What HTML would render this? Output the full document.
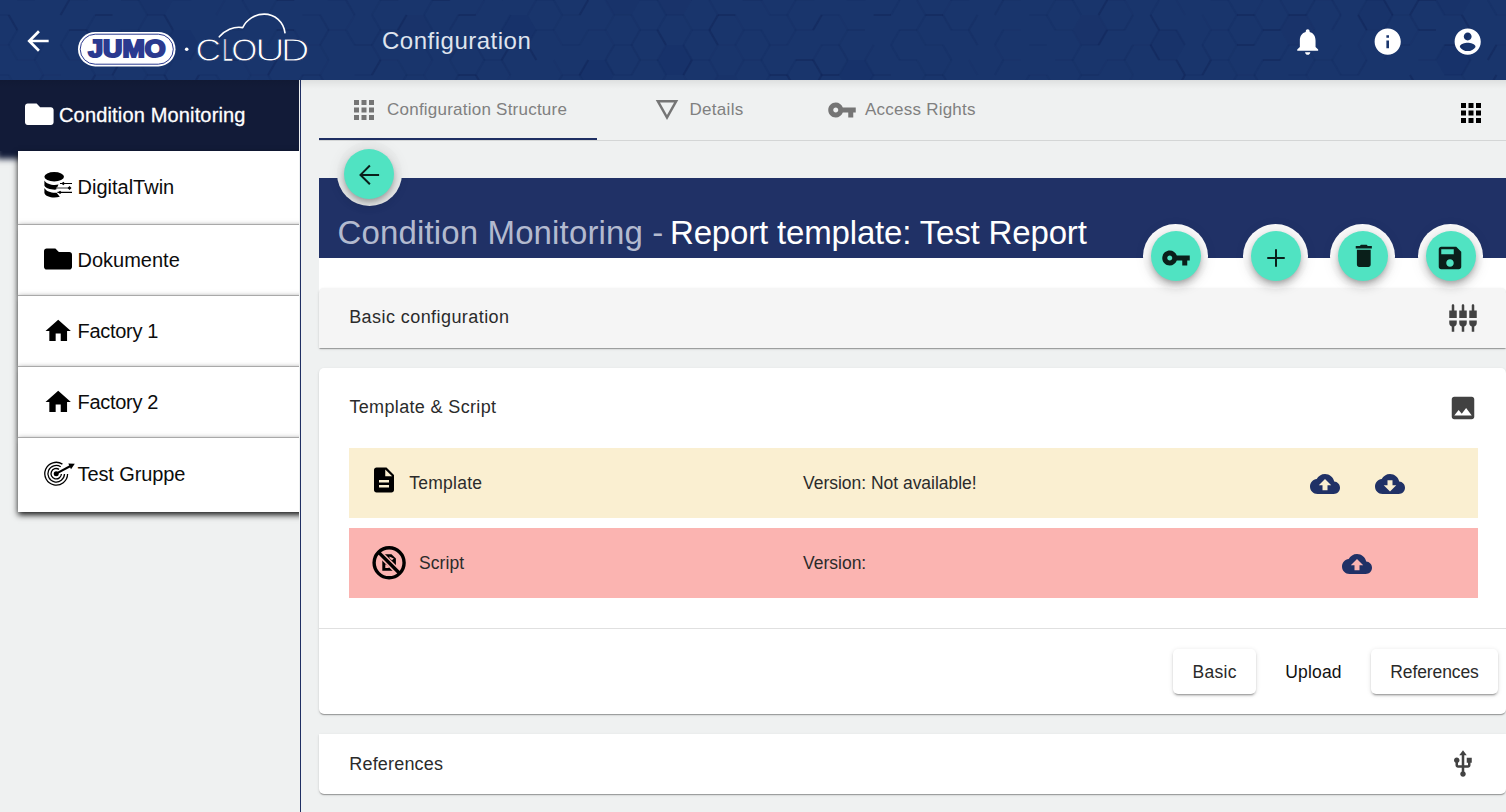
<!DOCTYPE html>
<html lang="en">
<head>
<meta charset="utf-8">
<title>Configuration</title>
<style>
*{box-sizing:border-box;margin:0;padding:0}
html,body{width:1506px;height:812px;overflow:hidden}
body{font-family:"Liberation Sans",sans-serif;background:#eff1f1;color:#212121;position:relative}
.abs{position:absolute}
svg{display:block;position:absolute;overflow:visible}
/* header */
#hdr{position:absolute;left:0;top:0;width:1506px;height:80px;background:#19356c;overflow:hidden;z-index:5}
#hdrshadow{position:absolute;left:0;top:80px;width:1506px;height:9px;background:linear-gradient(rgba(0,0,0,.075),rgba(0,0,0,.03) 50%,rgba(0,0,0,0));z-index:6;pointer-events:none}
#hdr .title{position:absolute;left:382px;top:26.800px;font-size:24px;line-height:28px;color:#dfe4ee;white-space:nowrap;letter-spacing:.5px}
/* sidebar */
#side{position:absolute;left:0;top:80px;width:299px;height:732px;overflow:hidden}
#sidehead{position:absolute;left:0;top:0;width:299px;height:71px;background:#121b38;box-shadow:0 4px 6px 4px #121b38}
#sidehead .t{-webkit-text-stroke:.3px #fff;position:absolute;left:59px;top:23px;font-size:20px;line-height:24px;color:#fff;white-space:nowrap;letter-spacing:.16px}
.li{position:absolute;left:18px;width:290px;background:#fff;box-shadow:0 3px 6px rgba(0,0,0,.9);border-top:1px solid #a9a9a9}
.li .t{position:absolute;left:59.500px;font-size:20px;line-height:24px;color:#0c0c0c;white-space:nowrap}
#vline{position:absolute;left:300px;top:80px;width:1px;height:732px;background:#1f2f63}
/* tabs */
.tab{position:absolute;top:80px;height:60px;font-size:17px;color:#808080;white-space:nowrap}
.tab .t{position:absolute;top:19.400px;line-height:22px}
#tabline{position:absolute;left:319px;top:140px;width:1187px;height:1px;background:#d4d6d6}
#ink{position:absolute;left:319px;top:138px;width:278px;height:2px;background:#1f2f63}
/* title bar */
#tbar{position:absolute;left:319px;top:178px;width:1187px;height:80px;background:#203166}
#tbar .t{position:absolute;left:18px;top:35px;font-size:33px;line-height:40px;color:#fff;white-space:nowrap}
#tbar .t.g{color:#b3bacf;letter-spacing:.14px}
#tbar .t.w{letter-spacing:-.165px}
#strip{position:absolute;left:319px;top:258px;width:1187px;height:35px;background:#fff}
.fab{z-index:3;position:absolute;width:50px;height:50px;border-radius:50%;background:#50e3c2;box-shadow:0 3px 5px -1px rgba(0,0,0,.2),0 6px 10px rgba(0,0,0,.14),0 1px 18px rgba(0,0,0,.12)}
.ring{z-index:2;position:absolute;width:65px;height:65px;border-radius:50%;background:#fcfcfc}
/* panels */
.panel{position:absolute;left:319px;width:1187px;background:#fff;box-shadow:0 2px 1px -1px rgba(0,0,0,.2),0 1px 1px rgba(0,0,0,.14),0 1px 3px rgba(0,0,0,.12)}
.panel .h{position:absolute;left:30px;font-size:18px;line-height:22px;color:#2b2b2b;white-space:nowrap}
.row{position:absolute;left:30px;width:1129px;height:70px}
.row .t{position:absolute;font-size:17.5px;line-height:22px;top:24px;color:#2b2b2b;white-space:nowrap}
.btn{position:absolute;top:281px;height:45px;border-radius:5px;background:#fff;box-shadow:0 3px 1px -2px rgba(0,0,0,.2),0 2px 2px rgba(0,0,0,.14),0 1px 5px rgba(0,0,0,.12);font-size:17.5px;line-height:46px;text-align:center;color:#2a2a2a;white-space:nowrap}
</style>
</head>
<body>
<!-- HEADER -->
<div id="hdr">
  <svg style="left:0;top:0" width="1506" height="80" viewBox="0 0 1506 80" id="hexbg"><g stroke="#0d1a4c" stroke-width="2" fill="none"><path d="M-43.2 -15.0L-34.6 -30.0" stroke-opacity="0.10"/><path d="M-34.6 -30.0L-17.3 -30.0" stroke-opacity="0.14"/><path d="M-17.3 -30.0L-8.7 -15.0" stroke-opacity="0.10"/><path d="M-43.2 15.0L-34.6 0.0" stroke-opacity="0.30"/><path d="M-34.6 0.0L-17.3 0.0" stroke-opacity="0.04"/><path d="M-43.2 45.0L-34.6 30.0" stroke-opacity="0.10"/><path d="M-34.6 30.0L-17.3 30.0" stroke-opacity="0.30"/><path d="M-43.2 45.0 L-34.6 30.0 L-17.3 30.0 L-8.7 45.0 L-17.3 60.0 L-34.6 60.0 Z" fill="#0d1f55" fill-opacity="0.07" stroke="none"/><path d="M-17.3 60.0L-8.7 75.0" stroke-opacity="0.14"/><path d="M-34.6 90.0L-17.3 90.0" stroke-opacity="0.30"/><path d="M-17.3 90.0L-8.7 105.0" stroke-opacity="0.10"/><path d="M-43.2 135.0L-34.6 120.0" stroke-opacity="0.30"/><path d="M-17.3 120.0L-8.7 135.0" stroke-opacity="0.30"/><path d="M-43.2 135.0 L-34.6 120.0 L-17.3 120.0 L-8.7 135.0 L-17.3 150.0 L-34.6 150.0 Z" fill="#0d1f55" fill-opacity="0.10" stroke="none"/><path d="M-17.3 0.0L-8.7 -15.0" stroke-opacity="0.04"/><path d="M-8.7 -15.0L8.7 -15.0" stroke-opacity="0.30"/><path d="M-17.3 30.0L-8.7 15.0" stroke-opacity="0.08"/><path d="M-8.7 15.0L8.7 15.0" stroke-opacity="0.10"/><path d="M8.7 15.0L17.3 30.0" stroke-opacity="0.30"/><path d="M-17.3 60.0L-8.7 45.0" stroke-opacity="0.14"/><path d="M-8.7 45.0L8.7 45.0" stroke-opacity="0.04"/><path d="M8.7 45.0L17.3 60.0" stroke-opacity="0.06"/><path d="M-8.7 75.0L8.7 75.0" stroke-opacity="0.10"/><path d="M8.7 75.0L17.3 90.0" stroke-opacity="0.06"/><path d="M-17.3 120.0L-8.7 105.0" stroke-opacity="0.14"/><path d="M8.7 105.0L17.3 120.0" stroke-opacity="0.06"/><path d="M8.7 -15.0L17.3 -30.0" stroke-opacity="0.04"/><path d="M17.3 -30.0L34.6 -30.0" stroke-opacity="0.14"/><path d="M34.6 -30.0L43.2 -15.0" stroke-opacity="0.06"/><path d="M8.7 -15.0 L17.3 -30.0 L34.6 -30.0 L43.2 -15.0 L34.6 0.0 L17.3 0.0 Z" fill="#0d1f55" fill-opacity="0.10" stroke="none"/><path d="M17.3 0.0L34.6 0.0" stroke-opacity="0.10"/><path d="M8.7 45.0L17.3 30.0" stroke-opacity="0.10"/><path d="M17.3 60.0L34.6 60.0" stroke-opacity="0.04"/><path d="M34.6 60.0L43.2 75.0" stroke-opacity="0.04"/><path d="M17.3 90.0L34.6 90.0" stroke-opacity="0.10"/><path d="M34.6 90.0L43.2 105.0" stroke-opacity="0.10"/><path d="M8.7 135.0L17.3 120.0" stroke-opacity="0.10"/><path d="M17.3 120.0L34.6 120.0" stroke-opacity="0.10"/><path d="M34.6 -30.0L43.3 -45.0" stroke-opacity="0.04"/><path d="M43.3 -45.0L60.6 -45.0" stroke-opacity="0.06"/><path d="M60.6 -45.0L69.2 -30.0" stroke-opacity="0.08"/><path d="M34.6 -30.0 L43.3 -45.0 L60.6 -45.0 L69.2 -30.0 L60.6 -15.0 L43.3 -15.0 Z" fill="#0d1f55" fill-opacity="0.07" stroke="none"/><path d="M43.3 -15.0L60.6 -15.0" stroke-opacity="0.10"/><path d="M34.6 60.0L43.3 45.0" stroke-opacity="0.10"/><path d="M60.6 45.0L69.2 60.0" stroke-opacity="0.14"/><path d="M34.6 90.0L43.3 75.0" stroke-opacity="0.14"/><path d="M43.3 75.0L60.6 75.0" stroke-opacity="0.04"/><path d="M34.6 120.0L43.3 105.0" stroke-opacity="0.10"/><path d="M60.6 105.0L69.2 120.0" stroke-opacity="0.10"/><path d="M60.6 -15.0L69.2 -30.0" stroke-opacity="0.04"/><path d="M86.5 -30.0L95.2 -15.0" stroke-opacity="0.06"/><path d="M60.6 15.0L69.2 0.0" stroke-opacity="0.30"/><path d="M69.2 0.0L86.5 0.0" stroke-opacity="0.06"/><path d="M60.6 45.0L69.2 30.0" stroke-opacity="0.10"/><path d="M69.2 30.0L86.5 30.0" stroke-opacity="0.30"/><path d="M86.5 30.0L95.2 45.0" stroke-opacity="0.30"/><path d="M69.2 60.0L86.5 60.0" stroke-opacity="0.04"/><path d="M86.5 60.0L95.2 75.0" stroke-opacity="0.10"/><path d="M60.6 105.0L69.2 90.0" stroke-opacity="0.30"/><path d="M69.2 90.0L86.5 90.0" stroke-opacity="0.08"/><path d="M86.5 90.0L95.2 105.0" stroke-opacity="0.06"/><path d="M86.5 120.0L95.2 135.0" stroke-opacity="0.04"/><path d="M86.5 -30.0L95.2 -45.0" stroke-opacity="0.04"/><path d="M112.5 -45.0L121.1 -30.0" stroke-opacity="0.30"/><path d="M86.5 0.0L95.2 -15.0" stroke-opacity="0.30"/><path d="M95.2 -15.0L112.5 -15.0" stroke-opacity="0.10"/><path d="M86.5 30.0L95.2 15.0" stroke-opacity="0.10"/><path d="M95.2 15.0L112.5 15.0" stroke-opacity="0.30"/><path d="M112.5 45.0L121.1 60.0" stroke-opacity="0.06"/><path d="M86.5 90.0L95.2 75.0" stroke-opacity="0.30"/><path d="M95.2 75.0L112.5 75.0" stroke-opacity="0.04"/><path d="M112.5 75.0L121.1 90.0" stroke-opacity="0.04"/><path d="M86.5 120.0L95.2 105.0" stroke-opacity="0.14"/><path d="M95.2 105.0L112.5 105.0" stroke-opacity="0.04"/><path d="M112.5 105.0L121.1 120.0" stroke-opacity="0.10"/><path d="M112.5 -15.0L121.1 -30.0" stroke-opacity="0.30"/><path d="M138.4 -30.0L147.1 -15.0" stroke-opacity="0.10"/><path d="M112.5 -15.0 L121.1 -30.0 L138.4 -30.0 L147.1 -15.0 L138.4 0.0 L121.1 0.0 Z" fill="#0d1f55" fill-opacity="0.04" stroke="none"/><path d="M121.1 0.0L138.4 0.0" stroke-opacity="0.14"/><path d="M138.4 0.0L147.1 15.0" stroke-opacity="0.06"/><path d="M112.5 45.0L121.1 30.0" stroke-opacity="0.10"/><path d="M121.1 30.0L138.4 30.0" stroke-opacity="0.06"/><path d="M138.4 30.0L147.1 45.0" stroke-opacity="0.10"/><path d="M112.5 75.0L121.1 60.0" stroke-opacity="0.30"/><path d="M121.1 60.0L138.4 60.0" stroke-opacity="0.10"/><path d="M138.4 60.0L147.1 75.0" stroke-opacity="0.06"/><path d="M138.4 90.0L147.1 105.0" stroke-opacity="0.04"/><path d="M112.5 135.0L121.1 120.0" stroke-opacity="0.30"/><path d="M121.1 120.0L138.4 120.0" stroke-opacity="0.30"/><path d="M138.4 -30.0L147.1 -45.0" stroke-opacity="0.04"/><path d="M138.4 0.0L147.1 -15.0" stroke-opacity="0.10"/><path d="M147.1 -15.0L164.4 -15.0" stroke-opacity="0.04"/><path d="M138.4 0.0 L147.1 -15.0 L164.4 -15.0 L173.0 0.0 L164.4 15.0 L147.1 15.0 Z" fill="#0d1f55" fill-opacity="0.07" stroke="none"/><path d="M138.4 30.0L147.1 15.0" stroke-opacity="0.08"/><path d="M147.1 15.0L164.4 15.0" stroke-opacity="0.14"/><path d="M164.4 15.0L173.0 30.0" stroke-opacity="0.30"/><path d="M147.1 45.0L164.4 45.0" stroke-opacity="0.08"/><path d="M138.4 90.0L147.1 75.0" stroke-opacity="0.08"/><path d="M147.1 75.0L164.4 75.0" stroke-opacity="0.14"/><path d="M164.4 75.0L173.0 90.0" stroke-opacity="0.30"/><path d="M138.4 120.0L147.1 105.0" stroke-opacity="0.30"/><path d="M164.3 -15.0L173.0 -30.0" stroke-opacity="0.08"/><path d="M173.0 -30.0L190.3 -30.0" stroke-opacity="0.06"/><path d="M164.3 -15.0 L173.0 -30.0 L190.3 -30.0 L199.0 -15.0 L190.3 0.0 L173.0 0.0 Z" fill="#0d1f55" fill-opacity="0.10" stroke="none"/><path d="M173.0 0.0L190.3 0.0" stroke-opacity="0.10"/><path d="M164.3 45.0L173.0 30.0" stroke-opacity="0.08"/><path d="M164.3 45.0 L173.0 30.0 L190.3 30.0 L199.0 45.0 L190.3 60.0 L173.0 60.0 Z" fill="#0d1f55" fill-opacity="0.10" stroke="none"/><path d="M164.3 75.0L173.0 60.0" stroke-opacity="0.08"/><path d="M164.3 105.0L173.0 90.0" stroke-opacity="0.08"/><path d="M173.0 90.0L190.3 90.0" stroke-opacity="0.08"/><path d="M173.0 120.0L190.3 120.0" stroke-opacity="0.10"/><path d="M190.3 -30.0L199.0 -45.0" stroke-opacity="0.30"/><path d="M216.3 -45.0L224.9 -30.0" stroke-opacity="0.30"/><path d="M190.3 0.0L199.0 -15.0" stroke-opacity="0.10"/><path d="M199.0 -15.0L216.3 -15.0" stroke-opacity="0.30"/><path d="M190.3 60.0L199.0 45.0" stroke-opacity="0.10"/><path d="M199.0 45.0L216.3 45.0" stroke-opacity="0.08"/><path d="M216.3 45.0L224.9 60.0" stroke-opacity="0.10"/><path d="M190.3 90.0L199.0 75.0" stroke-opacity="0.30"/><path d="M199.0 75.0L216.3 75.0" stroke-opacity="0.10"/><path d="M216.3 75.0L224.9 90.0" stroke-opacity="0.10"/><path d="M190.3 120.0L199.0 105.0" stroke-opacity="0.14"/><path d="M216.3 105.0L224.9 120.0" stroke-opacity="0.14"/><path d="M224.9 -30.0L242.2 -30.0" stroke-opacity="0.06"/><path d="M242.2 -30.0L250.9 -15.0" stroke-opacity="0.30"/><path d="M216.2 -15.0 L224.9 -30.0 L242.2 -30.0 L250.9 -15.0 L242.2 0.0 L224.9 0.0 Z" fill="#0d1f55" fill-opacity="0.04" stroke="none"/><path d="M216.2 15.0L224.9 0.0" stroke-opacity="0.04"/><path d="M242.2 0.0L250.9 15.0" stroke-opacity="0.10"/><path d="M216.2 45.0L224.9 30.0" stroke-opacity="0.10"/><path d="M224.9 30.0L242.2 30.0" stroke-opacity="0.06"/><path d="M224.9 60.0L242.2 60.0" stroke-opacity="0.30"/><path d="M242.2 60.0L250.9 75.0" stroke-opacity="0.04"/><path d="M216.2 105.0L224.9 90.0" stroke-opacity="0.08"/><path d="M224.9 90.0L242.2 90.0" stroke-opacity="0.10"/><path d="M242.2 90.0L250.9 105.0" stroke-opacity="0.10"/><path d="M216.2 135.0L224.9 120.0" stroke-opacity="0.08"/><path d="M224.9 120.0L242.2 120.0" stroke-opacity="0.10"/><path d="M242.2 120.0L250.9 135.0" stroke-opacity="0.06"/><path d="M242.2 -30.0L250.8 -45.0" stroke-opacity="0.10"/><path d="M250.8 -45.0L268.1 -45.0" stroke-opacity="0.04"/><path d="M268.1 -45.0L276.8 -30.0" stroke-opacity="0.04"/><path d="M242.2 0.0L250.8 -15.0" stroke-opacity="0.30"/><path d="M250.8 -15.0L268.1 -15.0" stroke-opacity="0.08"/><path d="M268.1 -15.0L276.8 0.0" stroke-opacity="0.04"/><path d="M242.2 30.0L250.8 15.0" stroke-opacity="0.10"/><path d="M250.8 15.0L268.1 15.0" stroke-opacity="0.08"/><path d="M242.2 60.0L250.8 45.0" stroke-opacity="0.06"/><path d="M242.2 90.0L250.8 75.0" stroke-opacity="0.06"/><path d="M250.8 75.0L268.1 75.0" stroke-opacity="0.04"/><path d="M268.1 75.0L276.8 90.0" stroke-opacity="0.10"/><path d="M242.2 120.0L250.8 105.0" stroke-opacity="0.14"/><path d="M250.8 105.0L268.1 105.0" stroke-opacity="0.10"/><path d="M268.1 105.0L276.8 120.0" stroke-opacity="0.08"/><path d="M268.1 -15.0L276.8 -30.0" stroke-opacity="0.30"/><path d="M276.8 -30.0L294.1 -30.0" stroke-opacity="0.10"/><path d="M294.1 -30.0L302.8 -15.0" stroke-opacity="0.08"/><path d="M268.1 -15.0 L276.8 -30.0 L294.1 -30.0 L302.8 -15.0 L294.1 0.0 L276.8 0.0 Z" fill="#0d1f55" fill-opacity="0.04" stroke="none"/><path d="M268.1 15.0L276.8 0.0" stroke-opacity="0.06"/><path d="M276.8 0.0L294.1 0.0" stroke-opacity="0.30"/><path d="M268.1 45.0L276.8 30.0" stroke-opacity="0.06"/><path d="M276.8 30.0L294.1 30.0" stroke-opacity="0.30"/><path d="M294.1 30.0L302.8 45.0" stroke-opacity="0.08"/><path d="M268.1 75.0L276.8 60.0" stroke-opacity="0.30"/><path d="M268.1 105.0L276.8 90.0" stroke-opacity="0.04"/><path d="M294.1 90.0L302.8 105.0" stroke-opacity="0.06"/><path d="M294.1 -30.0L302.8 -45.0" stroke-opacity="0.14"/><path d="M302.8 -45.0L320.1 -45.0" stroke-opacity="0.08"/><path d="M294.1 0.0L302.8 -15.0" stroke-opacity="0.04"/><path d="M302.8 -15.0L320.1 -15.0" stroke-opacity="0.10"/><path d="M320.1 -15.0L328.7 0.0" stroke-opacity="0.06"/><path d="M302.8 15.0L320.1 15.0" stroke-opacity="0.10"/><path d="M320.1 15.0L328.7 30.0" stroke-opacity="0.14"/><path d="M302.8 45.0L320.1 45.0" stroke-opacity="0.04"/><path d="M320.1 45.0L328.7 60.0" stroke-opacity="0.06"/><path d="M294.1 90.0L302.8 75.0" stroke-opacity="0.14"/><path d="M302.8 75.0L320.1 75.0" stroke-opacity="0.14"/><path d="M320.1 75.0L328.7 90.0" stroke-opacity="0.14"/><path d="M302.8 105.0L320.1 105.0" stroke-opacity="0.10"/><path d="M320.1 105.0L328.7 120.0" stroke-opacity="0.04"/><path d="M294.1 120.0 L302.8 105.0 L320.1 105.0 L328.7 120.0 L320.1 135.0 L302.8 135.0 Z" fill="#0d1f55" fill-opacity="0.10" stroke="none"/><path d="M320.1 -15.0L328.7 -30.0" stroke-opacity="0.10"/><path d="M346.0 -30.0L354.7 -15.0" stroke-opacity="0.10"/><path d="M328.7 0.0L346.0 0.0" stroke-opacity="0.10"/><path d="M346.0 0.0L354.7 15.0" stroke-opacity="0.14"/><path d="M320.1 45.0L328.7 30.0" stroke-opacity="0.14"/><path d="M328.7 30.0L346.0 30.0" stroke-opacity="0.08"/><path d="M346.0 30.0L354.7 45.0" stroke-opacity="0.10"/><path d="M320.1 75.0L328.7 60.0" stroke-opacity="0.04"/><path d="M320.1 105.0L328.7 90.0" stroke-opacity="0.10"/><path d="M346.0 90.0L354.7 105.0" stroke-opacity="0.06"/><path d="M320.1 135.0L328.7 120.0" stroke-opacity="0.08"/><path d="M328.7 120.0L346.0 120.0" stroke-opacity="0.06"/><path d="M371.9 -45.0L380.6 -30.0" stroke-opacity="0.10"/><path d="M346.0 0.0L354.7 -15.0" stroke-opacity="0.10"/><path d="M354.7 -15.0L371.9 -15.0" stroke-opacity="0.06"/><path d="M371.9 -15.0L380.6 0.0" stroke-opacity="0.10"/><path d="M346.0 30.0L354.7 15.0" stroke-opacity="0.04"/><path d="M371.9 15.0L380.6 30.0" stroke-opacity="0.10"/><path d="M354.7 45.0L371.9 45.0" stroke-opacity="0.14"/><path d="M371.9 45.0L380.6 60.0" stroke-opacity="0.08"/><path d="M354.7 75.0L371.9 75.0" stroke-opacity="0.10"/><path d="M346.0 120.0L354.7 105.0" stroke-opacity="0.14"/><path d="M354.7 105.0L371.9 105.0" stroke-opacity="0.10"/><path d="M371.9 105.0L380.6 120.0" stroke-opacity="0.10"/><path d="M380.6 -30.0L397.9 -30.0" stroke-opacity="0.04"/><path d="M397.9 -30.0L406.6 -15.0" stroke-opacity="0.10"/><path d="M371.9 15.0L380.6 0.0" stroke-opacity="0.06"/><path d="M380.6 0.0L397.9 0.0" stroke-opacity="0.14"/><path d="M371.9 45.0L380.6 30.0" stroke-opacity="0.14"/><path d="M380.6 30.0L397.9 30.0" stroke-opacity="0.06"/><path d="M397.9 30.0L406.6 45.0" stroke-opacity="0.06"/><path d="M371.9 75.0L380.6 60.0" stroke-opacity="0.30"/><path d="M380.6 60.0L397.9 60.0" stroke-opacity="0.04"/><path d="M397.9 60.0L406.6 75.0" stroke-opacity="0.06"/><path d="M371.9 105.0L380.6 90.0" stroke-opacity="0.14"/><path d="M380.6 90.0L397.9 90.0" stroke-opacity="0.14"/><path d="M397.9 90.0L406.6 105.0" stroke-opacity="0.06"/><path d="M371.9 135.0L380.6 120.0" stroke-opacity="0.04"/><path d="M380.6 120.0L397.9 120.0" stroke-opacity="0.10"/><path d="M397.9 120.0L406.6 135.0" stroke-opacity="0.14"/><path d="M406.6 -45.0L423.9 -45.0" stroke-opacity="0.30"/><path d="M423.9 -45.0L432.5 -30.0" stroke-opacity="0.10"/><path d="M397.9 -30.0 L406.6 -45.0 L423.9 -45.0 L432.5 -30.0 L423.9 -15.0 L406.6 -15.0 Z" fill="#0d1f55" fill-opacity="0.04" stroke="none"/><path d="M397.9 0.0L406.6 -15.0" stroke-opacity="0.14"/><path d="M406.6 -15.0L423.9 -15.0" stroke-opacity="0.10"/><path d="M423.9 -15.0L432.5 0.0" stroke-opacity="0.14"/><path d="M397.9 30.0L406.6 15.0" stroke-opacity="0.30"/><path d="M423.9 15.0L432.5 30.0" stroke-opacity="0.10"/><path d="M397.9 30.0 L406.6 15.0 L423.9 15.0 L432.5 30.0 L423.9 45.0 L406.6 45.0 Z" fill="#0d1f55" fill-opacity="0.04" stroke="none"/><path d="M406.6 45.0L423.9 45.0" stroke-opacity="0.14"/><path d="M423.9 45.0L432.5 60.0" stroke-opacity="0.10"/><path d="M397.9 90.0L406.6 75.0" stroke-opacity="0.10"/><path d="M406.6 75.0L423.9 75.0" stroke-opacity="0.06"/><path d="M423.9 75.0L432.5 90.0" stroke-opacity="0.04"/><path d="M406.6 105.0L423.9 105.0" stroke-opacity="0.08"/><path d="M423.9 105.0L432.5 120.0" stroke-opacity="0.10"/><path d="M423.9 -15.0L432.5 -30.0" stroke-opacity="0.10"/><path d="M432.5 -30.0L449.8 -30.0" stroke-opacity="0.14"/><path d="M449.8 -30.0L458.5 -15.0" stroke-opacity="0.08"/><path d="M423.9 15.0L432.5 0.0" stroke-opacity="0.10"/><path d="M432.5 0.0L449.8 0.0" stroke-opacity="0.30"/><path d="M423.9 75.0L432.5 60.0" stroke-opacity="0.04"/><path d="M449.8 60.0L458.5 75.0" stroke-opacity="0.06"/><path d="M423.9 105.0L432.5 90.0" stroke-opacity="0.08"/><path d="M432.5 90.0L449.8 90.0" stroke-opacity="0.04"/><path d="M449.8 90.0L458.5 105.0" stroke-opacity="0.30"/><path d="M423.9 135.0L432.5 120.0" stroke-opacity="0.10"/><path d="M432.5 120.0L449.8 120.0" stroke-opacity="0.30"/><path d="M449.8 -30.0L458.5 -45.0" stroke-opacity="0.30"/><path d="M458.5 -45.0L475.8 -45.0" stroke-opacity="0.06"/><path d="M475.8 -45.0L484.4 -30.0" stroke-opacity="0.04"/><path d="M449.8 0.0L458.5 -15.0" stroke-opacity="0.10"/><path d="M475.8 -15.0L484.4 0.0" stroke-opacity="0.10"/><path d="M449.8 30.0L458.5 15.0" stroke-opacity="0.14"/><path d="M458.5 15.0L475.8 15.0" stroke-opacity="0.30"/><path d="M449.8 60.0L458.5 45.0" stroke-opacity="0.14"/><path d="M458.5 45.0L475.8 45.0" stroke-opacity="0.04"/><path d="M475.8 45.0L484.4 60.0" stroke-opacity="0.14"/><path d="M449.8 90.0L458.5 75.0" stroke-opacity="0.14"/><path d="M458.5 75.0L475.8 75.0" stroke-opacity="0.30"/><path d="M475.8 75.0L484.4 90.0" stroke-opacity="0.30"/><path d="M449.8 120.0L458.5 105.0" stroke-opacity="0.04"/><path d="M458.5 105.0L475.8 105.0" stroke-opacity="0.08"/><path d="M475.8 -15.0L484.4 -30.0" stroke-opacity="0.08"/><path d="M484.4 -30.0L501.7 -30.0" stroke-opacity="0.04"/><path d="M501.7 -30.0L510.4 -15.0" stroke-opacity="0.04"/><path d="M475.8 15.0L484.4 0.0" stroke-opacity="0.04"/><path d="M501.7 30.0L510.4 45.0" stroke-opacity="0.06"/><path d="M475.8 75.0L484.4 60.0" stroke-opacity="0.10"/><path d="M484.4 60.0L501.7 60.0" stroke-opacity="0.10"/><path d="M501.7 60.0L510.4 75.0" stroke-opacity="0.14"/><path d="M484.4 90.0L501.7 90.0" stroke-opacity="0.04"/><path d="M501.7 90.0L510.4 105.0" stroke-opacity="0.10"/><path d="M501.7 120.0L510.4 135.0" stroke-opacity="0.04"/><path d="M501.7 -30.0L510.4 -45.0" stroke-opacity="0.08"/><path d="M510.4 -45.0L527.6 -45.0" stroke-opacity="0.08"/><path d="M501.7 0.0L510.4 -15.0" stroke-opacity="0.08"/><path d="M510.4 -15.0L527.6 -15.0" stroke-opacity="0.14"/><path d="M527.6 -15.0L536.3 0.0" stroke-opacity="0.04"/><path d="M501.7 30.0L510.4 15.0" stroke-opacity="0.10"/><path d="M501.7 30.0 L510.4 15.0 L527.6 15.0 L536.3 30.0 L527.6 45.0 L510.4 45.0 Z" fill="#0d1f55" fill-opacity="0.10" stroke="none"/><path d="M501.7 60.0L510.4 45.0" stroke-opacity="0.30"/><path d="M510.4 45.0L527.6 45.0" stroke-opacity="0.14"/><path d="M527.6 45.0L536.3 60.0" stroke-opacity="0.30"/><path d="M501.7 90.0L510.4 75.0" stroke-opacity="0.04"/><path d="M510.4 105.0L527.6 105.0" stroke-opacity="0.06"/><path d="M536.3 -30.0L553.6 -30.0" stroke-opacity="0.10"/><path d="M527.7 15.0L536.3 0.0" stroke-opacity="0.08"/><path d="M536.3 0.0L553.6 0.0" stroke-opacity="0.10"/><path d="M553.6 0.0L562.2 15.0" stroke-opacity="0.10"/><path d="M527.7 45.0L536.3 30.0" stroke-opacity="0.08"/><path d="M536.3 30.0L553.6 30.0" stroke-opacity="0.10"/><path d="M553.6 30.0L562.2 45.0" stroke-opacity="0.04"/><path d="M553.6 60.0L562.2 75.0" stroke-opacity="0.04"/><path d="M527.7 105.0L536.3 90.0" stroke-opacity="0.10"/><path d="M536.3 90.0L553.6 90.0" stroke-opacity="0.08"/><path d="M553.6 90.0L562.2 105.0" stroke-opacity="0.08"/><path d="M527.7 135.0L536.3 120.0" stroke-opacity="0.04"/><path d="M536.3 120.0L553.6 120.0" stroke-opacity="0.30"/><path d="M527.7 135.0 L536.3 120.0 L553.6 120.0 L562.2 135.0 L553.6 150.0 L536.3 150.0 Z" fill="#0d1f55" fill-opacity="0.04" stroke="none"/><path d="M553.6 -30.0L562.2 -45.0" stroke-opacity="0.08"/><path d="M579.5 -45.0L588.2 -30.0" stroke-opacity="0.10"/><path d="M553.6 0.0L562.2 -15.0" stroke-opacity="0.04"/><path d="M562.2 -15.0L579.5 -15.0" stroke-opacity="0.14"/><path d="M579.5 -15.0L588.2 0.0" stroke-opacity="0.30"/><path d="M553.6 30.0L562.2 15.0" stroke-opacity="0.06"/><path d="M562.2 15.0L579.5 15.0" stroke-opacity="0.06"/><path d="M562.2 45.0L579.5 45.0" stroke-opacity="0.10"/><path d="M553.6 90.0L562.2 75.0" stroke-opacity="0.14"/><path d="M562.2 75.0L579.5 75.0" stroke-opacity="0.08"/><path d="M579.5 75.0L588.2 90.0" stroke-opacity="0.10"/><path d="M553.6 120.0L562.2 105.0" stroke-opacity="0.10"/><path d="M562.2 105.0L579.5 105.0" stroke-opacity="0.04"/><path d="M553.6 120.0 L562.2 105.0 L579.5 105.0 L588.2 120.0 L579.5 135.0 L562.2 135.0 Z" fill="#0d1f55" fill-opacity="0.07" stroke="none"/><path d="M579.6 -15.0L588.2 -30.0" stroke-opacity="0.06"/><path d="M588.2 -30.0L605.5 -30.0" stroke-opacity="0.10"/><path d="M579.6 -15.0 L588.2 -30.0 L605.5 -30.0 L614.1 -15.0 L605.5 0.0 L588.2 0.0 Z" fill="#0d1f55" fill-opacity="0.07" stroke="none"/><path d="M579.6 15.0L588.2 0.0" stroke-opacity="0.30"/><path d="M605.5 0.0L614.1 15.0" stroke-opacity="0.04"/><path d="M579.6 45.0L588.2 30.0" stroke-opacity="0.06"/><path d="M588.2 30.0L605.5 30.0" stroke-opacity="0.08"/><path d="M605.5 30.0L614.1 45.0" stroke-opacity="0.04"/><path d="M579.6 75.0L588.2 60.0" stroke-opacity="0.30"/><path d="M605.5 60.0L614.1 75.0" stroke-opacity="0.14"/><path d="M579.6 75.0 L588.2 60.0 L605.5 60.0 L614.1 75.0 L605.5 90.0 L588.2 90.0 Z" fill="#0d1f55" fill-opacity="0.10" stroke="none"/><path d="M579.6 105.0L588.2 90.0" stroke-opacity="0.10"/><path d="M588.2 90.0L605.5 90.0" stroke-opacity="0.04"/><path d="M579.6 135.0L588.2 120.0" stroke-opacity="0.30"/><path d="M605.5 -30.0L614.2 -45.0" stroke-opacity="0.04"/><path d="M614.2 -45.0L631.5 -45.0" stroke-opacity="0.06"/><path d="M631.5 -45.0L640.1 -30.0" stroke-opacity="0.10"/><path d="M614.2 -15.0L631.5 -15.0" stroke-opacity="0.04"/><path d="M631.5 -15.0L640.1 0.0" stroke-opacity="0.10"/><path d="M605.5 0.0 L614.2 -15.0 L631.5 -15.0 L640.1 0.0 L631.5 15.0 L614.2 15.0 Z" fill="#0d1f55" fill-opacity="0.07" stroke="none"/><path d="M605.5 30.0L614.2 15.0" stroke-opacity="0.06"/><path d="M614.2 15.0L631.5 15.0" stroke-opacity="0.06"/><path d="M631.5 15.0L640.1 30.0" stroke-opacity="0.08"/><path d="M605.5 60.0L614.2 45.0" stroke-opacity="0.14"/><path d="M614.2 45.0L631.5 45.0" stroke-opacity="0.10"/><path d="M631.5 45.0L640.1 60.0" stroke-opacity="0.14"/><path d="M614.2 75.0L631.5 75.0" stroke-opacity="0.10"/><path d="M614.2 105.0L631.5 105.0" stroke-opacity="0.10"/><path d="M640.1 -30.0L657.4 -30.0" stroke-opacity="0.10"/><path d="M657.4 -30.0L666.0 -15.0" stroke-opacity="0.14"/><path d="M640.1 0.0L657.4 0.0" stroke-opacity="0.10"/><path d="M657.4 0.0L666.0 15.0" stroke-opacity="0.10"/><path d="M631.5 45.0L640.1 30.0" stroke-opacity="0.14"/><path d="M640.1 30.0L657.4 30.0" stroke-opacity="0.10"/><path d="M657.4 30.0L666.0 45.0" stroke-opacity="0.30"/><path d="M631.5 75.0L640.1 60.0" stroke-opacity="0.14"/><path d="M640.1 60.0L657.4 60.0" stroke-opacity="0.06"/><path d="M657.4 60.0L666.0 75.0" stroke-opacity="0.10"/><path d="M631.5 105.0L640.1 90.0" stroke-opacity="0.14"/><path d="M640.1 90.0L657.4 90.0" stroke-opacity="0.06"/><path d="M657.4 90.0L666.0 105.0" stroke-opacity="0.06"/><path d="M631.5 105.0 L640.1 90.0 L657.4 90.0 L666.0 105.0 L657.4 120.0 L640.1 120.0 Z" fill="#0d1f55" fill-opacity="0.04" stroke="none"/><path d="M631.5 135.0L640.1 120.0" stroke-opacity="0.30"/><path d="M657.4 -30.0L666.1 -45.0" stroke-opacity="0.10"/><path d="M683.4 -45.0L692.0 -30.0" stroke-opacity="0.08"/><path d="M666.1 -15.0L683.4 -15.0" stroke-opacity="0.30"/><path d="M683.4 -15.0L692.0 0.0" stroke-opacity="0.08"/><path d="M657.4 0.0 L666.1 -15.0 L683.4 -15.0 L692.0 0.0 L683.4 15.0 L666.1 15.0 Z" fill="#0d1f55" fill-opacity="0.04" stroke="none"/><path d="M657.4 30.0L666.1 15.0" stroke-opacity="0.10"/><path d="M666.1 15.0L683.4 15.0" stroke-opacity="0.10"/><path d="M683.4 15.0L692.0 30.0" stroke-opacity="0.06"/><path d="M657.4 60.0L666.1 45.0" stroke-opacity="0.04"/><path d="M683.4 45.0L692.0 60.0" stroke-opacity="0.14"/><path d="M657.4 60.0 L666.1 45.0 L683.4 45.0 L692.0 60.0 L683.4 75.0 L666.1 75.0 Z" fill="#0d1f55" fill-opacity="0.10" stroke="none"/><path d="M657.4 90.0L666.1 75.0" stroke-opacity="0.10"/><path d="M683.4 75.0L692.0 90.0" stroke-opacity="0.04"/><path d="M683.4 105.0L692.0 120.0" stroke-opacity="0.30"/><path d="M692.0 -30.0L709.3 -30.0" stroke-opacity="0.04"/><path d="M709.3 0.0L717.9 15.0" stroke-opacity="0.08"/><path d="M683.4 45.0L692.0 30.0" stroke-opacity="0.10"/><path d="M692.0 30.0L709.3 30.0" stroke-opacity="0.10"/><path d="M709.3 30.0L717.9 45.0" stroke-opacity="0.30"/><path d="M683.4 75.0L692.0 60.0" stroke-opacity="0.30"/><path d="M692.0 60.0L709.3 60.0" stroke-opacity="0.10"/><path d="M709.3 60.0L717.9 75.0" stroke-opacity="0.08"/><path d="M683.4 105.0L692.0 90.0" stroke-opacity="0.14"/><path d="M709.3 90.0L717.9 105.0" stroke-opacity="0.06"/><path d="M683.4 135.0L692.0 120.0" stroke-opacity="0.04"/><path d="M692.0 120.0L709.3 120.0" stroke-opacity="0.10"/><path d="M709.3 -30.0L718.0 -45.0" stroke-opacity="0.06"/><path d="M718.0 -45.0L735.2 -45.0" stroke-opacity="0.14"/><path d="M735.2 -45.0L743.9 -30.0" stroke-opacity="0.30"/><path d="M709.3 0.0L718.0 -15.0" stroke-opacity="0.06"/><path d="M718.0 -15.0L735.2 -15.0" stroke-opacity="0.06"/><path d="M735.2 -15.0L743.9 0.0" stroke-opacity="0.30"/><path d="M709.3 30.0L718.0 15.0" stroke-opacity="0.30"/><path d="M718.0 15.0L735.2 15.0" stroke-opacity="0.30"/><path d="M735.2 15.0L743.9 30.0" stroke-opacity="0.04"/><path d="M709.3 60.0L718.0 45.0" stroke-opacity="0.04"/><path d="M718.0 45.0L735.2 45.0" stroke-opacity="0.04"/><path d="M735.2 45.0L743.9 60.0" stroke-opacity="0.04"/><path d="M709.3 90.0L718.0 75.0" stroke-opacity="0.04"/><path d="M709.3 90.0 L718.0 75.0 L735.2 75.0 L743.9 90.0 L735.2 105.0 L718.0 105.0 Z" fill="#0d1f55" fill-opacity="0.07" stroke="none"/><path d="M709.3 120.0L718.0 105.0" stroke-opacity="0.10"/><path d="M735.2 105.0L743.9 120.0" stroke-opacity="0.30"/><path d="M709.3 120.0 L718.0 105.0 L735.2 105.0 L743.9 120.0 L735.2 135.0 L718.0 135.0 Z" fill="#0d1f55" fill-opacity="0.04" stroke="none"/><path d="M735.3 -15.0L743.9 -30.0" stroke-opacity="0.14"/><path d="M743.9 -30.0L761.2 -30.0" stroke-opacity="0.06"/><path d="M743.9 0.0L761.2 0.0" stroke-opacity="0.14"/><path d="M761.2 0.0L769.9 15.0" stroke-opacity="0.04"/><path d="M735.3 45.0L743.9 30.0" stroke-opacity="0.08"/><path d="M743.9 30.0L761.2 30.0" stroke-opacity="0.10"/><path d="M761.2 30.0L769.9 45.0" stroke-opacity="0.10"/><path d="M735.3 75.0L743.9 60.0" stroke-opacity="0.08"/><path d="M743.9 60.0L761.2 60.0" stroke-opacity="0.08"/><path d="M761.2 60.0L769.9 75.0" stroke-opacity="0.10"/><path d="M761.2 90.0L769.9 105.0" stroke-opacity="0.10"/><path d="M735.3 135.0L743.9 120.0" stroke-opacity="0.30"/><path d="M743.9 120.0L761.2 120.0" stroke-opacity="0.04"/><path d="M761.2 120.0L769.9 135.0" stroke-opacity="0.10"/><path d="M761.2 -30.0L769.9 -45.0" stroke-opacity="0.06"/><path d="M769.9 -45.0L787.1 -45.0" stroke-opacity="0.10"/><path d="M761.2 0.0L769.9 -15.0" stroke-opacity="0.30"/><path d="M769.9 -15.0L787.1 -15.0" stroke-opacity="0.08"/><path d="M787.1 -15.0L795.8 0.0" stroke-opacity="0.06"/><path d="M769.9 15.0L787.1 15.0" stroke-opacity="0.10"/><path d="M787.1 15.0L795.8 30.0" stroke-opacity="0.08"/><path d="M761.2 60.0L769.9 45.0" stroke-opacity="0.10"/><path d="M769.9 45.0L787.1 45.0" stroke-opacity="0.08"/><path d="M761.2 90.0L769.9 75.0" stroke-opacity="0.10"/><path d="M769.9 75.0L787.1 75.0" stroke-opacity="0.30"/><path d="M787.1 75.0L795.8 90.0" stroke-opacity="0.30"/><path d="M761.2 120.0L769.9 105.0" stroke-opacity="0.10"/><path d="M769.9 105.0L787.1 105.0" stroke-opacity="0.06"/><path d="M761.2 120.0 L769.9 105.0 L787.1 105.0 L795.8 120.0 L787.1 135.0 L769.9 135.0 Z" fill="#0d1f55" fill-opacity="0.04" stroke="none"/><path d="M787.2 -15.0L795.8 -30.0" stroke-opacity="0.30"/><path d="M813.1 -30.0L821.8 -15.0" stroke-opacity="0.06"/><path d="M787.2 15.0L795.8 0.0" stroke-opacity="0.08"/><path d="M795.8 0.0L813.1 0.0" stroke-opacity="0.06"/><path d="M787.2 45.0L795.8 30.0" stroke-opacity="0.08"/><path d="M795.8 30.0L813.1 30.0" stroke-opacity="0.08"/><path d="M787.2 75.0L795.8 60.0" stroke-opacity="0.10"/><path d="M795.8 60.0L813.1 60.0" stroke-opacity="0.30"/><path d="M813.1 60.0L821.8 75.0" stroke-opacity="0.30"/><path d="M787.2 105.0L795.8 90.0" stroke-opacity="0.06"/><path d="M795.8 90.0L813.1 90.0" stroke-opacity="0.10"/><path d="M813.1 90.0L821.8 105.0" stroke-opacity="0.14"/><path d="M787.2 135.0L795.8 120.0" stroke-opacity="0.06"/><path d="M795.8 120.0L813.1 120.0" stroke-opacity="0.10"/><path d="M813.1 120.0L821.8 135.0" stroke-opacity="0.08"/><path d="M813.1 -30.0L821.8 -45.0" stroke-opacity="0.14"/><path d="M821.8 -45.0L839.1 -45.0" stroke-opacity="0.04"/><path d="M813.1 0.0L821.8 -15.0" stroke-opacity="0.08"/><path d="M839.1 -15.0L847.7 0.0" stroke-opacity="0.08"/><path d="M813.1 30.0L821.8 15.0" stroke-opacity="0.30"/><path d="M821.8 15.0L839.1 15.0" stroke-opacity="0.10"/><path d="M839.1 15.0L847.7 30.0" stroke-opacity="0.04"/><path d="M813.1 60.0L821.8 45.0" stroke-opacity="0.08"/><path d="M821.8 45.0L839.1 45.0" stroke-opacity="0.10"/><path d="M839.1 45.0L847.7 60.0" stroke-opacity="0.14"/><path d="M813.1 90.0L821.8 75.0" stroke-opacity="0.30"/><path d="M821.8 75.0L839.1 75.0" stroke-opacity="0.30"/><path d="M813.1 120.0L821.8 105.0" stroke-opacity="0.10"/><path d="M821.8 105.0L839.1 105.0" stroke-opacity="0.06"/><path d="M847.7 -30.0L865.0 -30.0" stroke-opacity="0.14"/><path d="M847.7 0.0L865.0 0.0" stroke-opacity="0.10"/><path d="M839.1 45.0L847.7 30.0" stroke-opacity="0.06"/><path d="M847.7 30.0L865.0 30.0" stroke-opacity="0.14"/><path d="M839.1 75.0L847.7 60.0" stroke-opacity="0.06"/><path d="M865.0 60.0L873.6 75.0" stroke-opacity="0.08"/><path d="M839.1 75.0 L847.7 60.0 L865.0 60.0 L873.6 75.0 L865.0 90.0 L847.7 90.0 Z" fill="#0d1f55" fill-opacity="0.10" stroke="none"/><path d="M865.0 90.0L873.6 105.0" stroke-opacity="0.10"/><path d="M839.1 135.0L847.7 120.0" stroke-opacity="0.04"/><path d="M847.7 120.0L865.0 120.0" stroke-opacity="0.10"/><path d="M865.0 120.0L873.6 135.0" stroke-opacity="0.14"/><path d="M865.0 -30.0L873.7 -45.0" stroke-opacity="0.10"/><path d="M873.7 -45.0L891.0 -45.0" stroke-opacity="0.10"/><path d="M891.0 -45.0L899.6 -30.0" stroke-opacity="0.08"/><path d="M865.0 0.0L873.7 -15.0" stroke-opacity="0.08"/><path d="M891.0 -15.0L899.6 0.0" stroke-opacity="0.10"/><path d="M873.7 15.0L891.0 15.0" stroke-opacity="0.30"/><path d="M865.0 60.0L873.7 45.0" stroke-opacity="0.08"/><path d="M891.0 45.0L899.6 60.0" stroke-opacity="0.10"/><path d="M865.0 90.0L873.7 75.0" stroke-opacity="0.10"/><path d="M873.7 75.0L891.0 75.0" stroke-opacity="0.14"/><path d="M891.0 105.0L899.6 120.0" stroke-opacity="0.10"/><path d="M899.6 -30.0L916.9 -30.0" stroke-opacity="0.04"/><path d="M891.0 15.0L899.6 0.0" stroke-opacity="0.10"/><path d="M916.9 0.0L925.5 15.0" stroke-opacity="0.08"/><path d="M891.0 45.0L899.6 30.0" stroke-opacity="0.10"/><path d="M899.6 30.0L916.9 30.0" stroke-opacity="0.14"/><path d="M916.9 30.0L925.5 45.0" stroke-opacity="0.06"/><path d="M899.6 60.0L916.9 60.0" stroke-opacity="0.10"/><path d="M916.9 60.0L925.5 75.0" stroke-opacity="0.06"/><path d="M891.0 105.0L899.6 90.0" stroke-opacity="0.06"/><path d="M891.0 135.0L899.6 120.0" stroke-opacity="0.10"/><path d="M916.9 120.0L925.5 135.0" stroke-opacity="0.30"/><path d="M925.6 -45.0L942.9 -45.0" stroke-opacity="0.08"/><path d="M916.9 0.0L925.6 -15.0" stroke-opacity="0.08"/><path d="M925.6 -15.0L942.9 -15.0" stroke-opacity="0.04"/><path d="M942.9 -15.0L951.5 0.0" stroke-opacity="0.30"/><path d="M916.9 30.0L925.6 15.0" stroke-opacity="0.10"/><path d="M925.6 15.0L942.9 15.0" stroke-opacity="0.30"/><path d="M942.9 15.0L951.5 30.0" stroke-opacity="0.14"/><path d="M925.6 45.0L942.9 45.0" stroke-opacity="0.06"/><path d="M942.9 45.0L951.5 60.0" stroke-opacity="0.10"/><path d="M916.9 90.0L925.6 75.0" stroke-opacity="0.06"/><path d="M925.6 75.0L942.9 75.0" stroke-opacity="0.14"/><path d="M942.9 75.0L951.5 90.0" stroke-opacity="0.14"/><path d="M916.9 120.0L925.6 105.0" stroke-opacity="0.06"/><path d="M925.6 105.0L942.9 105.0" stroke-opacity="0.10"/><path d="M942.9 105.0L951.5 120.0" stroke-opacity="0.10"/><path d="M942.9 -15.0L951.5 -30.0" stroke-opacity="0.08"/><path d="M951.5 -30.0L968.8 -30.0" stroke-opacity="0.14"/><path d="M942.9 15.0L951.5 0.0" stroke-opacity="0.04"/><path d="M951.5 0.0L968.8 0.0" stroke-opacity="0.10"/><path d="M951.5 30.0L968.8 30.0" stroke-opacity="0.10"/><path d="M968.8 30.0L977.5 45.0" stroke-opacity="0.14"/><path d="M942.9 75.0L951.5 60.0" stroke-opacity="0.06"/><path d="M968.8 60.0L977.5 75.0" stroke-opacity="0.04"/><path d="M942.9 105.0L951.5 90.0" stroke-opacity="0.10"/><path d="M951.5 90.0L968.8 90.0" stroke-opacity="0.08"/><path d="M968.8 90.0L977.5 105.0" stroke-opacity="0.10"/><path d="M942.9 135.0L951.5 120.0" stroke-opacity="0.10"/><path d="M951.5 120.0L968.8 120.0" stroke-opacity="0.30"/><path d="M968.8 -30.0L977.5 -45.0" stroke-opacity="0.08"/><path d="M994.8 -45.0L1003.4 -30.0" stroke-opacity="0.06"/><path d="M968.8 0.0L977.5 -15.0" stroke-opacity="0.14"/><path d="M994.8 -15.0L1003.4 0.0" stroke-opacity="0.30"/><path d="M968.8 30.0L977.5 15.0" stroke-opacity="0.14"/><path d="M994.8 45.0L1003.4 60.0" stroke-opacity="0.04"/><path d="M968.8 120.0L977.5 105.0" stroke-opacity="0.30"/><path d="M977.5 105.0L994.8 105.0" stroke-opacity="0.14"/><path d="M994.8 -15.0L1003.4 -30.0" stroke-opacity="0.10"/><path d="M1020.7 -30.0L1029.4 -15.0" stroke-opacity="0.30"/><path d="M994.8 15.0L1003.4 0.0" stroke-opacity="0.14"/><path d="M1003.4 0.0L1020.7 0.0" stroke-opacity="0.06"/><path d="M994.8 45.0L1003.4 30.0" stroke-opacity="0.10"/><path d="M1003.4 30.0L1020.7 30.0" stroke-opacity="0.04"/><path d="M994.8 75.0L1003.4 60.0" stroke-opacity="0.10"/><path d="M1003.4 60.0L1020.7 60.0" stroke-opacity="0.04"/><path d="M994.8 105.0L1003.4 90.0" stroke-opacity="0.14"/><path d="M1003.4 90.0L1020.7 90.0" stroke-opacity="0.10"/><path d="M994.8 135.0L1003.4 120.0" stroke-opacity="0.06"/><path d="M1003.4 120.0L1020.7 120.0" stroke-opacity="0.08"/><path d="M1020.7 120.0L1029.4 135.0" stroke-opacity="0.06"/><path d="M1020.7 -30.0L1029.3 -45.0" stroke-opacity="0.14"/><path d="M1029.3 -45.0L1046.7 -45.0" stroke-opacity="0.06"/><path d="M1046.7 -45.0L1055.3 -30.0" stroke-opacity="0.10"/><path d="M1029.3 -15.0L1046.7 -15.0" stroke-opacity="0.08"/><path d="M1029.3 15.0L1046.7 15.0" stroke-opacity="0.10"/><path d="M1046.7 15.0L1055.3 30.0" stroke-opacity="0.10"/><path d="M1029.3 45.0L1046.7 45.0" stroke-opacity="0.10"/><path d="M1020.7 90.0L1029.3 75.0" stroke-opacity="0.10"/><path d="M1029.3 75.0L1046.7 75.0" stroke-opacity="0.04"/><path d="M1046.7 75.0L1055.3 90.0" stroke-opacity="0.06"/><path d="M1020.7 120.0L1029.3 105.0" stroke-opacity="0.10"/><path d="M1046.7 105.0L1055.3 120.0" stroke-opacity="0.04"/><path d="M1055.3 -30.0L1072.6 -30.0" stroke-opacity="0.06"/><path d="M1072.6 -30.0L1081.2 -15.0" stroke-opacity="0.10"/><path d="M1046.7 15.0L1055.3 0.0" stroke-opacity="0.06"/><path d="M1055.3 0.0L1072.6 0.0" stroke-opacity="0.08"/><path d="M1072.6 0.0L1081.2 15.0" stroke-opacity="0.10"/><path d="M1055.3 30.0L1072.6 30.0" stroke-opacity="0.06"/><path d="M1072.6 30.0L1081.2 45.0" stroke-opacity="0.04"/><path d="M1055.3 60.0L1072.6 60.0" stroke-opacity="0.08"/><path d="M1072.6 60.0L1081.2 75.0" stroke-opacity="0.06"/><path d="M1046.7 105.0L1055.3 90.0" stroke-opacity="0.30"/><path d="M1055.3 90.0L1072.6 90.0" stroke-opacity="0.10"/><path d="M1072.6 90.0L1081.2 105.0" stroke-opacity="0.08"/><path d="M1046.7 135.0L1055.3 120.0" stroke-opacity="0.10"/><path d="M1072.6 0.0L1081.2 -15.0" stroke-opacity="0.10"/><path d="M1098.6 -15.0L1107.2 0.0" stroke-opacity="0.10"/><path d="M1098.6 15.0L1107.2 30.0" stroke-opacity="0.04"/><path d="M1072.6 30.0 L1081.2 15.0 L1098.6 15.0 L1107.2 30.0 L1098.6 45.0 L1081.2 45.0 Z" fill="#0d1f55" fill-opacity="0.04" stroke="none"/><path d="M1072.6 60.0L1081.2 45.0" stroke-opacity="0.10"/><path d="M1081.2 45.0L1098.6 45.0" stroke-opacity="0.10"/><path d="M1072.6 90.0L1081.2 75.0" stroke-opacity="0.10"/><path d="M1081.2 75.0L1098.6 75.0" stroke-opacity="0.14"/><path d="M1081.2 105.0L1098.6 105.0" stroke-opacity="0.10"/><path d="M1098.6 105.0L1107.2 120.0" stroke-opacity="0.10"/><path d="M1098.6 -15.0L1107.2 -30.0" stroke-opacity="0.10"/><path d="M1107.2 -30.0L1124.5 -30.0" stroke-opacity="0.30"/><path d="M1098.6 15.0L1107.2 0.0" stroke-opacity="0.30"/><path d="M1107.2 0.0L1124.5 0.0" stroke-opacity="0.08"/><path d="M1124.5 0.0L1133.2 15.0" stroke-opacity="0.04"/><path d="M1098.6 45.0L1107.2 30.0" stroke-opacity="0.30"/><path d="M1107.2 30.0L1124.5 30.0" stroke-opacity="0.14"/><path d="M1098.6 75.0L1107.2 60.0" stroke-opacity="0.04"/><path d="M1107.2 60.0L1124.5 60.0" stroke-opacity="0.08"/><path d="M1124.5 60.0L1133.2 75.0" stroke-opacity="0.06"/><path d="M1107.2 90.0L1124.5 90.0" stroke-opacity="0.14"/><path d="M1124.5 90.0L1133.2 105.0" stroke-opacity="0.10"/><path d="M1098.6 135.0L1107.2 120.0" stroke-opacity="0.08"/><path d="M1107.2 120.0L1124.5 120.0" stroke-opacity="0.06"/><path d="M1133.1 -45.0L1150.5 -45.0" stroke-opacity="0.06"/><path d="M1150.5 -45.0L1159.1 -30.0" stroke-opacity="0.14"/><path d="M1124.5 0.0L1133.1 -15.0" stroke-opacity="0.14"/><path d="M1133.1 -15.0L1150.5 -15.0" stroke-opacity="0.04"/><path d="M1150.5 -15.0L1159.1 0.0" stroke-opacity="0.08"/><path d="M1124.5 30.0L1133.1 15.0" stroke-opacity="0.14"/><path d="M1150.5 15.0L1159.1 30.0" stroke-opacity="0.30"/><path d="M1124.5 60.0L1133.1 45.0" stroke-opacity="0.14"/><path d="M1133.1 45.0L1150.5 45.0" stroke-opacity="0.04"/><path d="M1150.5 45.0L1159.1 60.0" stroke-opacity="0.30"/><path d="M1124.5 90.0L1133.1 75.0" stroke-opacity="0.04"/><path d="M1124.5 120.0L1133.1 105.0" stroke-opacity="0.30"/><path d="M1133.1 105.0L1150.5 105.0" stroke-opacity="0.10"/><path d="M1150.5 105.0L1159.1 120.0" stroke-opacity="0.08"/><path d="M1150.5 -15.0L1159.1 -30.0" stroke-opacity="0.08"/><path d="M1159.1 -30.0L1176.4 -30.0" stroke-opacity="0.06"/><path d="M1176.4 -30.0L1185.0 -15.0" stroke-opacity="0.10"/><path d="M1150.5 15.0L1159.1 0.0" stroke-opacity="0.10"/><path d="M1176.4 0.0L1185.0 15.0" stroke-opacity="0.04"/><path d="M1150.5 45.0L1159.1 30.0" stroke-opacity="0.14"/><path d="M1159.1 30.0L1176.4 30.0" stroke-opacity="0.14"/><path d="M1176.4 30.0L1185.0 45.0" stroke-opacity="0.14"/><path d="M1150.5 45.0 L1159.1 30.0 L1176.4 30.0 L1185.0 45.0 L1176.4 60.0 L1159.1 60.0 Z" fill="#0d1f55" fill-opacity="0.07" stroke="none"/><path d="M1159.1 60.0L1176.4 60.0" stroke-opacity="0.08"/><path d="M1176.4 60.0L1185.0 75.0" stroke-opacity="0.30"/><path d="M1159.1 90.0L1176.4 90.0" stroke-opacity="0.06"/><path d="M1176.4 90.0L1185.0 105.0" stroke-opacity="0.08"/><path d="M1150.5 135.0L1159.1 120.0" stroke-opacity="0.30"/><path d="M1159.1 120.0L1176.4 120.0" stroke-opacity="0.08"/><path d="M1176.4 -30.0L1185.0 -45.0" stroke-opacity="0.14"/><path d="M1202.4 -45.0L1211.0 -30.0" stroke-opacity="0.10"/><path d="M1176.4 -30.0 L1185.0 -45.0 L1202.4 -45.0 L1211.0 -30.0 L1202.4 -15.0 L1185.0 -15.0 Z" fill="#0d1f55" fill-opacity="0.04" stroke="none"/><path d="M1185.0 -15.0L1202.4 -15.0" stroke-opacity="0.06"/><path d="M1202.4 -15.0L1211.0 0.0" stroke-opacity="0.10"/><path d="M1202.4 15.0L1211.0 30.0" stroke-opacity="0.04"/><path d="M1202.4 45.0L1211.0 60.0" stroke-opacity="0.14"/><path d="M1176.4 90.0L1185.0 75.0" stroke-opacity="0.30"/><path d="M1185.0 75.0L1202.4 75.0" stroke-opacity="0.10"/><path d="M1185.0 105.0L1202.4 105.0" stroke-opacity="0.06"/><path d="M1202.4 105.0L1211.0 120.0" stroke-opacity="0.04"/><path d="M1202.4 -15.0L1211.0 -30.0" stroke-opacity="0.08"/><path d="M1211.0 0.0L1228.3 0.0" stroke-opacity="0.10"/><path d="M1228.3 0.0L1237.0 15.0" stroke-opacity="0.10"/><path d="M1202.4 45.0L1211.0 30.0" stroke-opacity="0.10"/><path d="M1211.0 30.0L1228.3 30.0" stroke-opacity="0.08"/><path d="M1228.3 30.0L1237.0 45.0" stroke-opacity="0.10"/><path d="M1202.4 75.0L1211.0 60.0" stroke-opacity="0.30"/><path d="M1211.0 60.0L1228.3 60.0" stroke-opacity="0.10"/><path d="M1228.3 60.0L1237.0 75.0" stroke-opacity="0.06"/><path d="M1202.4 105.0L1211.0 90.0" stroke-opacity="0.10"/><path d="M1211.0 90.0L1228.3 90.0" stroke-opacity="0.10"/><path d="M1228.3 90.0L1237.0 105.0" stroke-opacity="0.10"/><path d="M1211.0 120.0L1228.3 120.0" stroke-opacity="0.14"/><path d="M1228.3 120.0L1237.0 135.0" stroke-opacity="0.08"/><path d="M1228.3 -30.0L1237.0 -45.0" stroke-opacity="0.10"/><path d="M1237.0 -45.0L1254.3 -45.0" stroke-opacity="0.10"/><path d="M1237.0 -15.0L1254.3 -15.0" stroke-opacity="0.06"/><path d="M1254.3 -15.0L1262.9 0.0" stroke-opacity="0.30"/><path d="M1228.3 30.0L1237.0 15.0" stroke-opacity="0.10"/><path d="M1237.0 15.0L1254.3 15.0" stroke-opacity="0.30"/><path d="M1254.3 15.0L1262.9 30.0" stroke-opacity="0.08"/><path d="M1228.3 60.0L1237.0 45.0" stroke-opacity="0.06"/><path d="M1237.0 45.0L1254.3 45.0" stroke-opacity="0.30"/><path d="M1228.3 90.0L1237.0 75.0" stroke-opacity="0.10"/><path d="M1237.0 75.0L1254.3 75.0" stroke-opacity="0.04"/><path d="M1254.3 75.0L1262.9 90.0" stroke-opacity="0.14"/><path d="M1237.0 105.0L1254.3 105.0" stroke-opacity="0.10"/><path d="M1254.2 -15.0L1262.9 -30.0" stroke-opacity="0.04"/><path d="M1262.9 -30.0L1280.2 -30.0" stroke-opacity="0.14"/><path d="M1280.2 -30.0L1288.8 -15.0" stroke-opacity="0.06"/><path d="M1254.2 15.0L1262.9 0.0" stroke-opacity="0.04"/><path d="M1280.2 0.0L1288.8 15.0" stroke-opacity="0.08"/><path d="M1254.2 45.0L1262.9 30.0" stroke-opacity="0.10"/><path d="M1262.9 30.0L1280.2 30.0" stroke-opacity="0.30"/><path d="M1254.2 75.0L1262.9 60.0" stroke-opacity="0.10"/><path d="M1262.9 60.0L1280.2 60.0" stroke-opacity="0.30"/><path d="M1262.9 90.0L1280.2 90.0" stroke-opacity="0.14"/><path d="M1254.2 135.0L1262.9 120.0" stroke-opacity="0.14"/><path d="M1262.9 120.0L1280.2 120.0" stroke-opacity="0.30"/><path d="M1280.2 120.0L1288.8 135.0" stroke-opacity="0.10"/><path d="M1254.2 135.0 L1262.9 120.0 L1280.2 120.0 L1288.8 135.0 L1280.2 150.0 L1262.9 150.0 Z" fill="#0d1f55" fill-opacity="0.04" stroke="none"/><path d="M1280.2 -30.0L1288.8 -45.0" stroke-opacity="0.06"/><path d="M1306.2 -45.0L1314.8 -30.0" stroke-opacity="0.08"/><path d="M1280.2 0.0L1288.8 -15.0" stroke-opacity="0.10"/><path d="M1288.8 -15.0L1306.2 -15.0" stroke-opacity="0.10"/><path d="M1306.2 -15.0L1314.8 0.0" stroke-opacity="0.14"/><path d="M1280.2 30.0L1288.8 15.0" stroke-opacity="0.08"/><path d="M1288.8 15.0L1306.2 15.0" stroke-opacity="0.30"/><path d="M1306.2 15.0L1314.8 30.0" stroke-opacity="0.04"/><path d="M1280.2 30.0 L1288.8 15.0 L1306.2 15.0 L1314.8 30.0 L1306.2 45.0 L1288.8 45.0 Z" fill="#0d1f55" fill-opacity="0.04" stroke="none"/><path d="M1280.2 60.0L1288.8 45.0" stroke-opacity="0.10"/><path d="M1288.8 45.0L1306.2 45.0" stroke-opacity="0.08"/><path d="M1306.2 45.0L1314.8 60.0" stroke-opacity="0.06"/><path d="M1288.8 75.0L1306.2 75.0" stroke-opacity="0.10"/><path d="M1306.2 75.0L1314.8 90.0" stroke-opacity="0.04"/><path d="M1288.8 105.0L1306.2 105.0" stroke-opacity="0.04"/><path d="M1306.2 105.0L1314.8 120.0" stroke-opacity="0.08"/><path d="M1306.2 -15.0L1314.8 -30.0" stroke-opacity="0.08"/><path d="M1314.8 -30.0L1332.1 -30.0" stroke-opacity="0.10"/><path d="M1306.2 15.0L1314.8 0.0" stroke-opacity="0.14"/><path d="M1314.8 0.0L1332.1 0.0" stroke-opacity="0.04"/><path d="M1332.1 0.0L1340.8 15.0" stroke-opacity="0.14"/><path d="M1306.2 45.0L1314.8 30.0" stroke-opacity="0.04"/><path d="M1306.2 75.0L1314.8 60.0" stroke-opacity="0.08"/><path d="M1314.8 60.0L1332.1 60.0" stroke-opacity="0.06"/><path d="M1332.1 60.0L1340.8 75.0" stroke-opacity="0.10"/><path d="M1314.8 90.0L1332.1 90.0" stroke-opacity="0.08"/><path d="M1332.1 90.0L1340.8 105.0" stroke-opacity="0.10"/><path d="M1314.8 120.0L1332.1 120.0" stroke-opacity="0.04"/><path d="M1332.1 120.0L1340.8 135.0" stroke-opacity="0.06"/><path d="M1332.1 -30.0L1340.8 -45.0" stroke-opacity="0.04"/><path d="M1340.8 -45.0L1358.1 -45.0" stroke-opacity="0.06"/><path d="M1332.1 0.0L1340.8 -15.0" stroke-opacity="0.14"/><path d="M1340.8 -15.0L1358.1 -15.0" stroke-opacity="0.06"/><path d="M1358.1 -15.0L1366.7 0.0" stroke-opacity="0.06"/><path d="M1332.1 30.0L1340.8 15.0" stroke-opacity="0.14"/><path d="M1358.1 15.0L1366.7 30.0" stroke-opacity="0.30"/><path d="M1332.1 60.0L1340.8 45.0" stroke-opacity="0.06"/><path d="M1358.1 45.0L1366.7 60.0" stroke-opacity="0.04"/><path d="M1340.8 75.0L1358.1 75.0" stroke-opacity="0.10"/><path d="M1332.1 120.0L1340.8 105.0" stroke-opacity="0.14"/><path d="M1358.1 105.0L1366.7 120.0" stroke-opacity="0.14"/><path d="M1366.7 -30.0L1384.0 -30.0" stroke-opacity="0.30"/><path d="M1384.0 -30.0L1392.7 -15.0" stroke-opacity="0.30"/><path d="M1358.1 15.0L1366.7 0.0" stroke-opacity="0.06"/><path d="M1366.7 0.0L1384.0 0.0" stroke-opacity="0.10"/><path d="M1384.0 0.0L1392.7 15.0" stroke-opacity="0.30"/><path d="M1358.1 15.0 L1366.7 0.0 L1384.0 0.0 L1392.7 15.0 L1384.0 30.0 L1366.7 30.0 Z" fill="#0d1f55" fill-opacity="0.07" stroke="none"/><path d="M1358.1 45.0L1366.7 30.0" stroke-opacity="0.04"/><path d="M1366.7 30.0L1384.0 30.0" stroke-opacity="0.04"/><path d="M1358.1 75.0L1366.7 60.0" stroke-opacity="0.14"/><path d="M1384.0 90.0L1392.7 105.0" stroke-opacity="0.30"/><path d="M1358.1 135.0L1366.7 120.0" stroke-opacity="0.30"/><path d="M1366.7 120.0L1384.0 120.0" stroke-opacity="0.10"/><path d="M1384.0 -30.0L1392.6 -45.0" stroke-opacity="0.10"/><path d="M1384.0 -30.0 L1392.6 -45.0 L1410.0 -45.0 L1418.6 -30.0 L1410.0 -15.0 L1392.6 -15.0 Z" fill="#0d1f55" fill-opacity="0.10" stroke="none"/><path d="M1384.0 0.0L1392.6 -15.0" stroke-opacity="0.08"/><path d="M1392.6 -15.0L1410.0 -15.0" stroke-opacity="0.08"/><path d="M1410.0 -15.0L1418.6 0.0" stroke-opacity="0.10"/><path d="M1384.0 30.0L1392.6 15.0" stroke-opacity="0.14"/><path d="M1392.6 15.0L1410.0 15.0" stroke-opacity="0.06"/><path d="M1410.0 15.0L1418.6 30.0" stroke-opacity="0.14"/><path d="M1384.0 60.0L1392.6 45.0" stroke-opacity="0.14"/><path d="M1392.6 45.0L1410.0 45.0" stroke-opacity="0.14"/><path d="M1410.0 75.0L1418.6 90.0" stroke-opacity="0.30"/><path d="M1384.0 120.0L1392.6 105.0" stroke-opacity="0.10"/><path d="M1392.6 105.0L1410.0 105.0" stroke-opacity="0.14"/><path d="M1410.0 105.0L1418.6 120.0" stroke-opacity="0.06"/><path d="M1410.0 -15.0L1418.6 -30.0" stroke-opacity="0.04"/><path d="M1418.6 -30.0L1435.9 -30.0" stroke-opacity="0.06"/><path d="M1435.9 -30.0L1444.5 -15.0" stroke-opacity="0.10"/><path d="M1410.0 15.0L1418.6 0.0" stroke-opacity="0.30"/><path d="M1418.6 0.0L1435.9 0.0" stroke-opacity="0.30"/><path d="M1435.9 0.0L1444.5 15.0" stroke-opacity="0.10"/><path d="M1410.0 45.0L1418.6 30.0" stroke-opacity="0.04"/><path d="M1418.6 30.0L1435.9 30.0" stroke-opacity="0.30"/><path d="M1418.6 60.0L1435.9 60.0" stroke-opacity="0.08"/><path d="M1410.0 105.0L1418.6 90.0" stroke-opacity="0.30"/><path d="M1418.6 90.0L1435.9 90.0" stroke-opacity="0.10"/><path d="M1435.9 90.0L1444.5 105.0" stroke-opacity="0.10"/><path d="M1410.0 135.0L1418.6 120.0" stroke-opacity="0.06"/><path d="M1444.5 -45.0L1461.9 -45.0" stroke-opacity="0.30"/><path d="M1461.9 -45.0L1470.5 -30.0" stroke-opacity="0.14"/><path d="M1435.9 0.0L1444.5 -15.0" stroke-opacity="0.04"/><path d="M1444.5 -15.0L1461.9 -15.0" stroke-opacity="0.30"/><path d="M1435.9 0.0 L1444.5 -15.0 L1461.9 -15.0 L1470.5 0.0 L1461.9 15.0 L1444.5 15.0 Z" fill="#0d1f55" fill-opacity="0.07" stroke="none"/><path d="M1444.5 15.0L1461.9 15.0" stroke-opacity="0.08"/><path d="M1461.9 15.0L1470.5 30.0" stroke-opacity="0.30"/><path d="M1435.9 60.0L1444.5 45.0" stroke-opacity="0.06"/><path d="M1444.5 45.0L1461.9 45.0" stroke-opacity="0.30"/><path d="M1461.9 45.0L1470.5 60.0" stroke-opacity="0.10"/><path d="M1435.9 60.0 L1444.5 45.0 L1461.9 45.0 L1470.5 60.0 L1461.9 75.0 L1444.5 75.0 Z" fill="#0d1f55" fill-opacity="0.10" stroke="none"/><path d="M1444.5 75.0L1461.9 75.0" stroke-opacity="0.10"/><path d="M1461.9 75.0L1470.5 90.0" stroke-opacity="0.06"/><path d="M1435.9 120.0L1444.5 105.0" stroke-opacity="0.10"/><path d="M1444.5 105.0L1461.9 105.0" stroke-opacity="0.30"/><path d="M1461.9 105.0L1470.5 120.0" stroke-opacity="0.10"/><path d="M1435.9 120.0 L1444.5 105.0 L1461.9 105.0 L1470.5 120.0 L1461.9 135.0 L1444.5 135.0 Z" fill="#0d1f55" fill-opacity="0.07" stroke="none"/><path d="M1461.9 -15.0L1470.5 -30.0" stroke-opacity="0.10"/><path d="M1470.5 -30.0L1487.8 -30.0" stroke-opacity="0.08"/><path d="M1487.8 -30.0L1496.5 -15.0" stroke-opacity="0.04"/><path d="M1487.8 0.0L1496.5 15.0" stroke-opacity="0.10"/><path d="M1461.9 45.0L1470.5 30.0" stroke-opacity="0.30"/><path d="M1461.9 75.0L1470.5 60.0" stroke-opacity="0.14"/><path d="M1461.9 105.0L1470.5 90.0" stroke-opacity="0.14"/><path d="M1461.9 135.0L1470.5 120.0" stroke-opacity="0.06"/><path d="M1470.5 120.0L1487.8 120.0" stroke-opacity="0.10"/><path d="M1487.8 120.0L1496.5 135.0" stroke-opacity="0.10"/><path d="M1496.5 -45.0L1513.8 -45.0" stroke-opacity="0.30"/><path d="M1513.8 -45.0L1522.4 -30.0" stroke-opacity="0.04"/><path d="M1496.5 -15.0L1513.8 -15.0" stroke-opacity="0.14"/><path d="M1513.8 -15.0L1522.4 0.0" stroke-opacity="0.04"/><path d="M1496.5 15.0L1513.8 15.0" stroke-opacity="0.04"/><path d="M1513.8 15.0L1522.4 30.0" stroke-opacity="0.08"/><path d="M1487.8 60.0L1496.5 45.0" stroke-opacity="0.30"/><path d="M1496.5 45.0L1513.8 45.0" stroke-opacity="0.04"/><path d="M1487.8 90.0L1496.5 75.0" stroke-opacity="0.30"/><path d="M1513.8 75.0L1522.4 90.0" stroke-opacity="0.08"/><path d="M1487.8 120.0L1496.5 105.0" stroke-opacity="0.30"/><path d="M1513.8 105.0L1522.4 120.0" stroke-opacity="0.10"/><path d="M1513.8 -15.0L1522.4 -30.0" stroke-opacity="0.04"/><path d="M1522.4 -30.0L1539.7 -30.0" stroke-opacity="0.10"/><path d="M1539.7 -30.0L1548.3 -15.0" stroke-opacity="0.10"/><path d="M1513.8 15.0L1522.4 0.0" stroke-opacity="0.04"/><path d="M1522.4 0.0L1539.7 0.0" stroke-opacity="0.10"/><path d="M1539.7 0.0L1548.3 15.0" stroke-opacity="0.08"/><path d="M1513.8 45.0L1522.4 30.0" stroke-opacity="0.14"/><path d="M1539.7 30.0L1548.3 45.0" stroke-opacity="0.10"/><path d="M1513.8 75.0L1522.4 60.0" stroke-opacity="0.04"/><path d="M1522.4 60.0L1539.7 60.0" stroke-opacity="0.30"/><path d="M1539.7 60.0L1548.3 75.0" stroke-opacity="0.10"/><path d="M1513.8 105.0L1522.4 90.0" stroke-opacity="0.10"/><path d="M1522.4 90.0L1539.7 90.0" stroke-opacity="0.10"/><path d="M1539.7 90.0L1548.3 105.0" stroke-opacity="0.10"/><path d="M1522.4 120.0L1539.7 120.0" stroke-opacity="0.10"/><path d="M1539.7 120.0L1548.3 135.0" stroke-opacity="0.04"/><path d="M1539.7 -30.0L1548.3 -45.0" stroke-opacity="0.10"/><path d="M1539.7 0.0L1548.3 -15.0" stroke-opacity="0.08"/><path d="M1548.3 -15.0L1565.7 -15.0" stroke-opacity="0.06"/><path d="M1565.7 -15.0L1574.3 0.0" stroke-opacity="0.30"/><path d="M1539.7 0.0 L1548.3 -15.0 L1565.7 -15.0 L1574.3 0.0 L1565.7 15.0 L1548.3 15.0 Z" fill="#0d1f55" fill-opacity="0.04" stroke="none"/><path d="M1539.7 30.0L1548.3 15.0" stroke-opacity="0.06"/><path d="M1548.3 15.0L1565.7 15.0" stroke-opacity="0.14"/><path d="M1565.7 15.0L1574.3 30.0" stroke-opacity="0.10"/><path d="M1539.7 60.0L1548.3 45.0" stroke-opacity="0.04"/><path d="M1548.3 45.0L1565.7 45.0" stroke-opacity="0.06"/><path d="M1548.3 75.0L1565.7 75.0" stroke-opacity="0.08"/><path d="M1565.7 105.0L1574.3 120.0" stroke-opacity="0.08"/></g></svg>
  <svg style="left:22.200px;top:25.200px" width="32" height="32" viewBox="0 0 24 24"><path d="M20 11H7.83l5.59-5.590L12 4l-8 8 8 8 1.410-1.410L7.830 13H20v-2z" fill="#fff"/></svg>
  <!-- logo -->
  <svg style="left:70px;top:5px" width="250" height="70" viewBox="70 5 250 70" role="img" aria-label="JUMO CLOUD"><title>JUMO CLOUD</title>
    <rect x="78" y="32" width="97.500" height="34.400" rx="17.200" fill="#fff"/>
    <rect x="80.200" y="34.200" width="93.100" height="30" rx="15" fill="none" stroke="#2b3a8f" stroke-width="1"/>
    <text x="88.200" y="57.400" font-family="Liberation Sans, sans-serif" font-weight="bold" font-size="23.300" fill="#2b3a8f" stroke="#2b3a8f" stroke-width="2" stroke-linejoin="miter" textLength="77.300" lengthAdjust="spacingAndGlyphs">JUMO</text>
    <circle cx="186.700" cy="49.300" r="1.800" fill="#fff"/>
    <g font-family="Liberation Sans, sans-serif" font-size="31" fill="#fff" stroke="#19356c"><text transform="translate(195.60 60.6) scale(1.141 1)" stroke-width="1.0" vector-effect="non-scaling-stroke">C</text><text transform="translate(222.46 60.6) scale(0.607 1)" stroke-width="0.6" vector-effect="non-scaling-stroke">L</text><text transform="translate(231.16 60.6) scale(1.082 1)" stroke-width="0.9" vector-effect="non-scaling-stroke">O</text><text transform="translate(254.91 60.6) scale(1.335 1)" stroke-width="1.2" vector-effect="non-scaling-stroke">U</text><text transform="translate(280.73 60.6) scale(1.285 1)" stroke-width="1.2" vector-effect="non-scaling-stroke">D</text></g>
    <path d="M219.300 36.800C224.500 30.500 233.500 26 242.700 27.600C246.500 19.500 255 14.100 264.200 14.100C275 14.100 283.500 22 285 32.800" fill="none" stroke="#fff" stroke-width="1.600" stroke-linecap="round" stroke-linejoin="round"/>
  </svg>
  <div class="title">Configuration</div>
  <svg style="left:1292.3px;top:25.600px" width="31.400" height="31.400" viewBox="0 0 24 24"><path d="M12 22c1.100 0 2-.900 2-2h-4c0 1.100.890 2 2 2zm6-6v-5c0-3.070-1.640-5.640-4.500-6.320V4c0-.830-.670-1.500-1.500-1.500s-1.500.670-1.500 1.500v.680C7.630 5.360 6 7.920 6 11v5l-2 2v1h16v-1l-2-2z" fill="#fff"/></svg>
  <svg style="left:1372.3px;top:25.600px" width="31.400" height="31.400" viewBox="0 0 24 24"><path d="M12 2C6.480 2 2 6.480 2 12s4.480 10 10 10 10-4.480 10-10S17.520 2 12 2zm1 15h-2v-6h2v6zm0-8h-2V7h2v2z" fill="#fff"/></svg>
  <svg style="left:1452.3px;top:25.600px" width="31.400" height="31.400" viewBox="0 0 24 24"><path d="M12 2C6.480 2 2 6.480 2 12s4.480 10 10 10 10-4.480 10-10S17.520 2 12 2zm0 3c1.660 0 3 1.340 3 3s-1.340 3-3 3-3-1.340-3-3 1.340-3 3-3zm0 14.200c-2.500 0-4.710-1.280-6-3.220.030-1.990 4-3.080 6-3.080 1.990 0 5.970 1.090 6 3.080-1.290 1.940-3.500 3.220-6 3.220z" fill="#fff"/></svg>
</div>
<div id="hdrshadow"></div>

<!-- SIDEBAR -->
<div id="side">
  <div id="sidehead">
    <svg style="left:25px;top:20.200px" width="28.600" height="28.600" viewBox="0 0 512 512"><path d="M464 128H272l-64-64H48C21.490 64 0 85.490 0 112v288c0 26.510 21.490 48 48 48h416c26.510 0 48-21.490 48-48V176c0-26.510-21.490-48-48-48z" fill="#fff"/></svg>
    <div class="t">Condition Monitoring</div>
  </div>
  <div class="li" style="top:71px;height:73px;border-top:none">
    <svg style="left:26px;top:21px" width="29" height="27" viewBox="44 172 29 27">
      <ellipse cx="54.200" cy="176.700" rx="9.800" ry="4.700" fill="#000"/>
      <path d="M44.400 180.500C46.500 184.200 53 185.800 58.500 184.600L56.200 189.600C51 189.900 45.500 188.400 44.400 185.500Z" fill="#000"/>
      <path d="M44.400 188C46 191.500 52 193.200 56.600 192.700L59.800 196.800C53 198.800 45.600 196.800 44.400 193Z" fill="#000"/>
      <path d="M60 183.500H72M57.400 192.400H72" stroke="#000" stroke-width="1.100" fill="none"/>
      <path d="M56.200 188H70" stroke="#777" stroke-width="1.500" fill="none"/>
      <path d="M61.300 183.500L63.400 181.800L65 183.500L63.400 185.200ZM71.500 188L69.500 186L67.600 188L69.500 190ZM58 192.400L60.100 190.700L61.800 192.400L60.100 194.100Z" fill="#000"/>
    </svg>
    <div class="t" style="top:24px">DigitalTwin</div>
  </div>
  <div class="li" style="top:144px;height:71px">
    <svg style="left:26px;top:19.800px" width="28" height="28" viewBox="0 0 512 512"><path d="M464 128H272l-64-64H48C21.490 64 0 85.490 0 112v288c0 26.510 21.490 48 48 48h416c26.510 0 48-21.490 48-48V176c0-26.510-21.490-48-48-48z" fill="#000"/></svg>
    <div class="t" style="top:23px">Dokumente</div>
  </div>
  <div class="li" style="top:215px;height:71px">
    <svg style="left:24.900px;top:19.800px" width="30.400" height="30" viewBox="0 0 24 24" preserveAspectRatio="none"><path d="M10 20v-6h4v6h5v-8h3L12 3 2 12h3v8z" fill="#000"/></svg>
    <div class="t" style="top:23px;letter-spacing:-.3px">Factory 1</div>
  </div>
  <div class="li" style="top:286px;height:71px">
    <svg style="left:24.900px;top:19.800px" width="30.400" height="30" viewBox="0 0 24 24" preserveAspectRatio="none"><path d="M10 20v-6h4v6h5v-8h3L12 3 2 12h3v8z" fill="#000"/></svg>
    <div class="t" style="top:23px;letter-spacing:-.3px">Factory 2</div>
  </div>
  <div class="li" style="top:357px;height:75px">
    <svg style="left:26px;top:23px" width="32" height="26" viewBox="44 461 32 26">
      <g fill="none" stroke="#000" stroke-width="1.300"><path d="M62.41 464.14A11.4 11.4 0 1 0 67.60 474.00"/><path d="M60.72 466.74A8.3 8.3 0 1 0 64.50 474.00"/><path d="M59.03 469.34A5.2 5.2 0 1 0 61.40 474.00"/></g>
      <circle cx="56.200" cy="473.700" r="2.500" fill="#000"/>
      <path d="M56.200 473.700L70.500 466" stroke="#000" stroke-width="2" fill="none"/>
      <path d="M74.800 463.800L68.300 463.600L71 469.200Z" fill="#000"/>
    </svg>
    <div class="t" style="top:24px;letter-spacing:-.1px">Test Gruppe</div>
  </div>
</div>
<div id="vline"></div>

<!-- TABS -->
<div class="tab" style="left:319px;width:278px">
  <svg style="left:30px;top:15px" width="30" height="30" viewBox="0 0 24 24"><path d="M4 8h4V4H4v4zm6 12h4v-4h-4v4zm-6 0h4v-4H4v4zm0-6h4v-4H4v4zm6 0h4v-4h-4v4zm6-10v4h4V4h-4zm-6 4h4V4h-4v4zm6 6h4v-4h-4v4zm0 6h4v-4h-4v4z" fill="#757575"/></svg>
  <div class="t" style="left:68px;letter-spacing:.23px">Configuration Structure</div>
</div>
<div class="tab" style="left:617px;width:160px">
  <svg style="left:34.800px;top:15px" width="30" height="30" viewBox="0 0 24 24"><path d="M3 4l9 16 9-16H3zm3.380 2h11.250L12 16 6.380 6z" fill="#757575"/></svg>
  <div class="t" style="left:72.500px;letter-spacing:.3px">Details</div>
</div>
<div class="tab" style="left:797px;width:200px">
  <svg style="left:30px;top:15px" width="30" height="30" viewBox="0 0 24 24"><path d="M12.650 10C11.830 7.670 9.610 6 7 6c-3.310 0-6 2.690-6 6s2.690 6 6 6c2.610 0 4.830-1.670 5.650-4H17v4h4v-4h2v-4H12.650zM7 14c-1.100 0-2-.900-2-2s.900-2 2-2 2 .900 2 2-.900 2-2 2z" fill="#757575"/></svg>
  <div class="t" style="left:68px;letter-spacing:.23px">Access Rights</div>
</div>
<svg style="left:1455.500px;top:97.800px" width="30" height="30" viewBox="0 0 24 24"><path d="M4 8h4V4H4v4zm6 12h4v-4h-4v4zm-6 0h4v-4H4v4zm0-6h4v-4H4v4zm6 0h4v-4h-4v4zm6-10v4h4V4h-4zm-6 4h4V4h-4v4zm6 6h4v-4h-4v4zm0 6h4v-4h-4v4z" fill="#000"/></svg>
<div id="tabline"></div>
<div id="ink"></div>

<!-- TITLE BAR -->
<div id="tbar"><div class="t g" style="left:18.500px">Condition Monitoring -</div><div class="t w" style="left:351px">Report template: Test Report</div></div>
<div id="strip"></div>
<div class="ring" style="left:336.500px;top:140.700px;background:#eceeee"></div>
<div class="fab" style="left:344px;top:149px">
  <svg style="left:0;top:0" width="50" height="50" viewBox="0 0 50 50"><path d="M35.100 25.900H17M25.900 16.500L16.500 25.900L25.900 35.300" fill="none" stroke="#0a1f1a" stroke-width="2"/></svg>
</div>
<div class="ring" style="left:1142.800px;top:223.500px"></div>
<div class="ring" style="left:1242.800px;top:223.500px"></div>
<div class="ring" style="left:1329.800px;top:223.500px"></div>
<div class="ring" style="left:1417.800px;top:223.500px"></div>
<div class="fab" style="left:1151px;top:231px">
  <svg style="left:9.500px;top:12px" width="30" height="30" viewBox="0 0 24 24"><path d="M12.650 10C11.830 7.670 9.610 6 7 6c-3.310 0-6 2.690-6 6s2.690 6 6 6c2.610 0 4.830-1.670 5.650-4H17v4h4v-4h2v-4H12.650zM7 14c-1.100 0-2-.900-2-2s.900-2 2-2 2 .900 2 2-.900 2-2 2z" fill="#0a1f1a"/></svg>
</div>
<div class="fab" style="left:1251px;top:231px">
  <svg style="left:9.600px;top:12px" width="30" height="30" viewBox="0 0 24 24"><path d="M19 12.800h-6.200V19h-1.600v-6.200H5v-1.600h6.200V5h1.600v6.200H19v1.600z" fill="#0a1f1a"/></svg>
</div>
<div class="fab" style="left:1338px;top:231px">
  <svg style="left:11.600px;top:9.900px" width="27.600" height="29.600" preserveAspectRatio="none" viewBox="0 0 24 24"><path d="M6 19c0 1.100.900 2 2 2h8c1.100 0 2-.900 2-2V7H6v12zM19 4h-3.500l-1-1h-5l-1 1H5v2h14V4z" fill="#0a1f1a"/></svg>
</div>
<div class="fab" style="left:1426px;top:231px">
  <svg style="left:9.100px;top:12.100px" width="30" height="30" viewBox="0 0 24 24"><path d="M17 3H5c-1.110 0-2 .900-2 2v14c0 1.100.890 2 2 2h14c1.100 0 2-.900 2-2V7l-4-4zm-5 16c-1.660 0-3-1.340-3-3s1.340-3 3-3 3 1.340 3 3-1.340 3-3 3zm3-10H5V5h10v4z" fill="#0a1f1a"/></svg>
</div>

<!-- PANELS -->
<div class="panel" style="top:288px;height:60px;background:#f5f5f5;border-radius:5px 5px 0 0">
  <div class="h" style="top:18px;left:30.200px;letter-spacing:.43px">Basic configuration</div>
  <svg style="left:1128.500px;top:15px" width="30" height="30" viewBox="0 0 24 24"><path d="M5 2c0-.550-.450-1-1-1s-1 .450-1 1v4H1v6h6V6H5V2zm4 14c0 1.300.840 2.400 2 2.820V23h2v-4.180c1.160-.410 2-1.510 2-2.820v-2H9v2zm-8 0c0 1.300.840 2.400 2 2.820V23h2v-4.180C6.160 18.400 7 17.300 7 16v-2H1v2zM21 6V2c0-.550-.450-1-1-1s-1 .450-1 1v4h-2v6h6V6h-2zm-8-4c0-.550-.450-1-1-1s-1 .450-1 1v4H9v6h6V6h-2V2zm4 14c0 1.300.840 2.400 2 2.820V23h2v-4.180c1.160-.410 2-1.510 2-2.820v-2h-6v2z" fill="#424242"/></svg>
</div>
<div class="panel" style="top:368px;height:346px;border-radius:5px">
  <div class="h" style="top:28px;left:30.400px;letter-spacing:.35px">Template &amp; Script</div>
  <svg style="left:1129px;top:25px" width="30" height="30" viewBox="0 0 24 24"><path d="M21 19V5c0-1.100-.900-2-2-2H5c-1.100 0-2 .900-2 2v14c0 1.100.900 2 2 2h14c1.100 0 2-.900 2-2zM8.500 13.500l2.500 3.010L14.500 12l4.500 6H5l3.500-4.500z" fill="#424242"/></svg>
  <div class="row" style="top:80px;background:#faefd1">
    <svg style="left:20px;top:17px" width="30" height="30" viewBox="0 0 24 24"><path d="M14 2H6c-1.100 0-1.990.900-1.990 2L4 20c0 1.100.890 2 1.990 2H18c1.100 0 2-.900 2-2V8l-6-6zm2 16H8v-2h8v2zm0-4H8v-2h8v2zm-3-5V3.500L18.500 9H13z" fill="#000"/></svg>
    <div class="t" style="left:60.300px;letter-spacing:.25px">Template</div>
    <div class="t" style="left:454px;letter-spacing:-.02px">Version: Not available!</div>
    <svg style="left:960.800px;top:20.700px" width="30" height="30" viewBox="0 0 24 24"><path d="M19.350 10.040C18.670 6.590 15.640 4 12 4 9.110 4 6.600 5.640 5.350 8.040 2.340 8.360 0 10.910 0 14c0 3.310 2.690 6 6 6h13c2.760 0 5-2.240 5-5 0-2.640-2.050-4.780-4.650-4.960zM14 13v4h-4v-4H7l5-5 5 5h-3z" fill="#203166"/></svg>
    <svg style="left:1025.900px;top:20.700px" width="30" height="30" viewBox="0 0 24 24"><path d="M19.350 10.040C18.670 6.590 15.640 4 12 4 9.110 4 6.600 5.640 5.350 8.040 2.340 8.360 0 10.910 0 14c0 3.310 2.690 6 6 6h13c2.760 0 5-2.240 5-5 0-2.640-2.050-4.780-4.650-4.960zM17 13l-5 5-5-5h3V9h4v4h3z" fill="#203166"/></svg>
  </div>
  <div class="row" style="top:160px;background:#fbb4b1">
    <svg style="left:23px;top:18px" width="34" height="34" viewBox="372 546 34 34">
      <path d="M382.300 554.200H391.500L395.900 558.600V570.700H382.300Z" fill="#000"/>
      <path d="M385.300 564.300L388.800 566.200V568H385.300Z" fill="#fbb4b1"/><path d="M389.200 556.400L393.800 558.400L392 560.200L389.800 558.600Z" fill="#fbb4b1"/>
      <path d="M376.500 550.200L401.700 575.400" stroke="#fbb4b1" stroke-width="6.400" fill="none"/>
      <path d="M378.200 551.900L400 573.700" stroke="#000" stroke-width="3.400" fill="none"/>
      <circle cx="389.100" cy="562.800" r="15" fill="none" stroke="#000" stroke-width="3.400"/>
    </svg>
    <div class="t" style="left:70px;letter-spacing:.1px">Script</div>
    <div class="t" style="left:454px;letter-spacing:0">Version:</div>
    <svg style="left:993.200px;top:20.700px" width="30" height="30" viewBox="0 0 24 24"><path d="M19.350 10.040C18.670 6.590 15.640 4 12 4 9.110 4 6.600 5.640 5.350 8.040 2.340 8.360 0 10.910 0 14c0 3.310 2.690 6 6 6h13c2.760 0 5-2.240 5-5 0-2.640-2.050-4.780-4.650-4.960zM14 13v4h-4v-4H7l5-5 5 5h-3z" fill="#203166"/></svg>
  </div>
  <div class="abs" style="left:0;top:260px;width:1187px;height:1px;background:#e0e0e0"></div>
  <div class="btn" style="left:854px;width:83px;letter-spacing:.35px;text-indent:.3px">Basic</div>
  <div class="btn" style="left:947px;width:95px;box-shadow:none;background:none;color:#111;letter-spacing:.15px">Upload</div>
  <div class="btn" style="left:1052px;width:127px;letter-spacing:-.1px">References</div>
</div>
<div class="panel" style="top:734px;height:60px;border-radius:0 0 5px 5px">
  <div class="h" style="top:19px;left:30.300px;letter-spacing:.18px">References</div>
  <svg style="left:1129px;top:14.800px" width="30" height="30" viewBox="0 0 24 24"><path d="M15 7v4h1v2h-3V5h2l-3-4-3 4h2v8H8v-2.070c.7-.370 1.200-1.080 1.200-1.930 0-1.210-.990-2.200-2.200-2.200-1.210 0-2.200.990-2.200 2.200 0 .850.500 1.560 1.200 1.930V13c0 1.110.890 2 2 2h3v3.050c-.710.370-1.200 1.100-1.200 1.950 0 1.220.990 2.200 2.200 2.200 1.210 0 2.200-.980 2.200-2.200 0-.850-.490-1.580-1.200-1.950V15h3c1.110 0 2-.890 2-2v-2h1V7h-4z" fill="#424242"/></svg>
</div>
</body>
</html>
